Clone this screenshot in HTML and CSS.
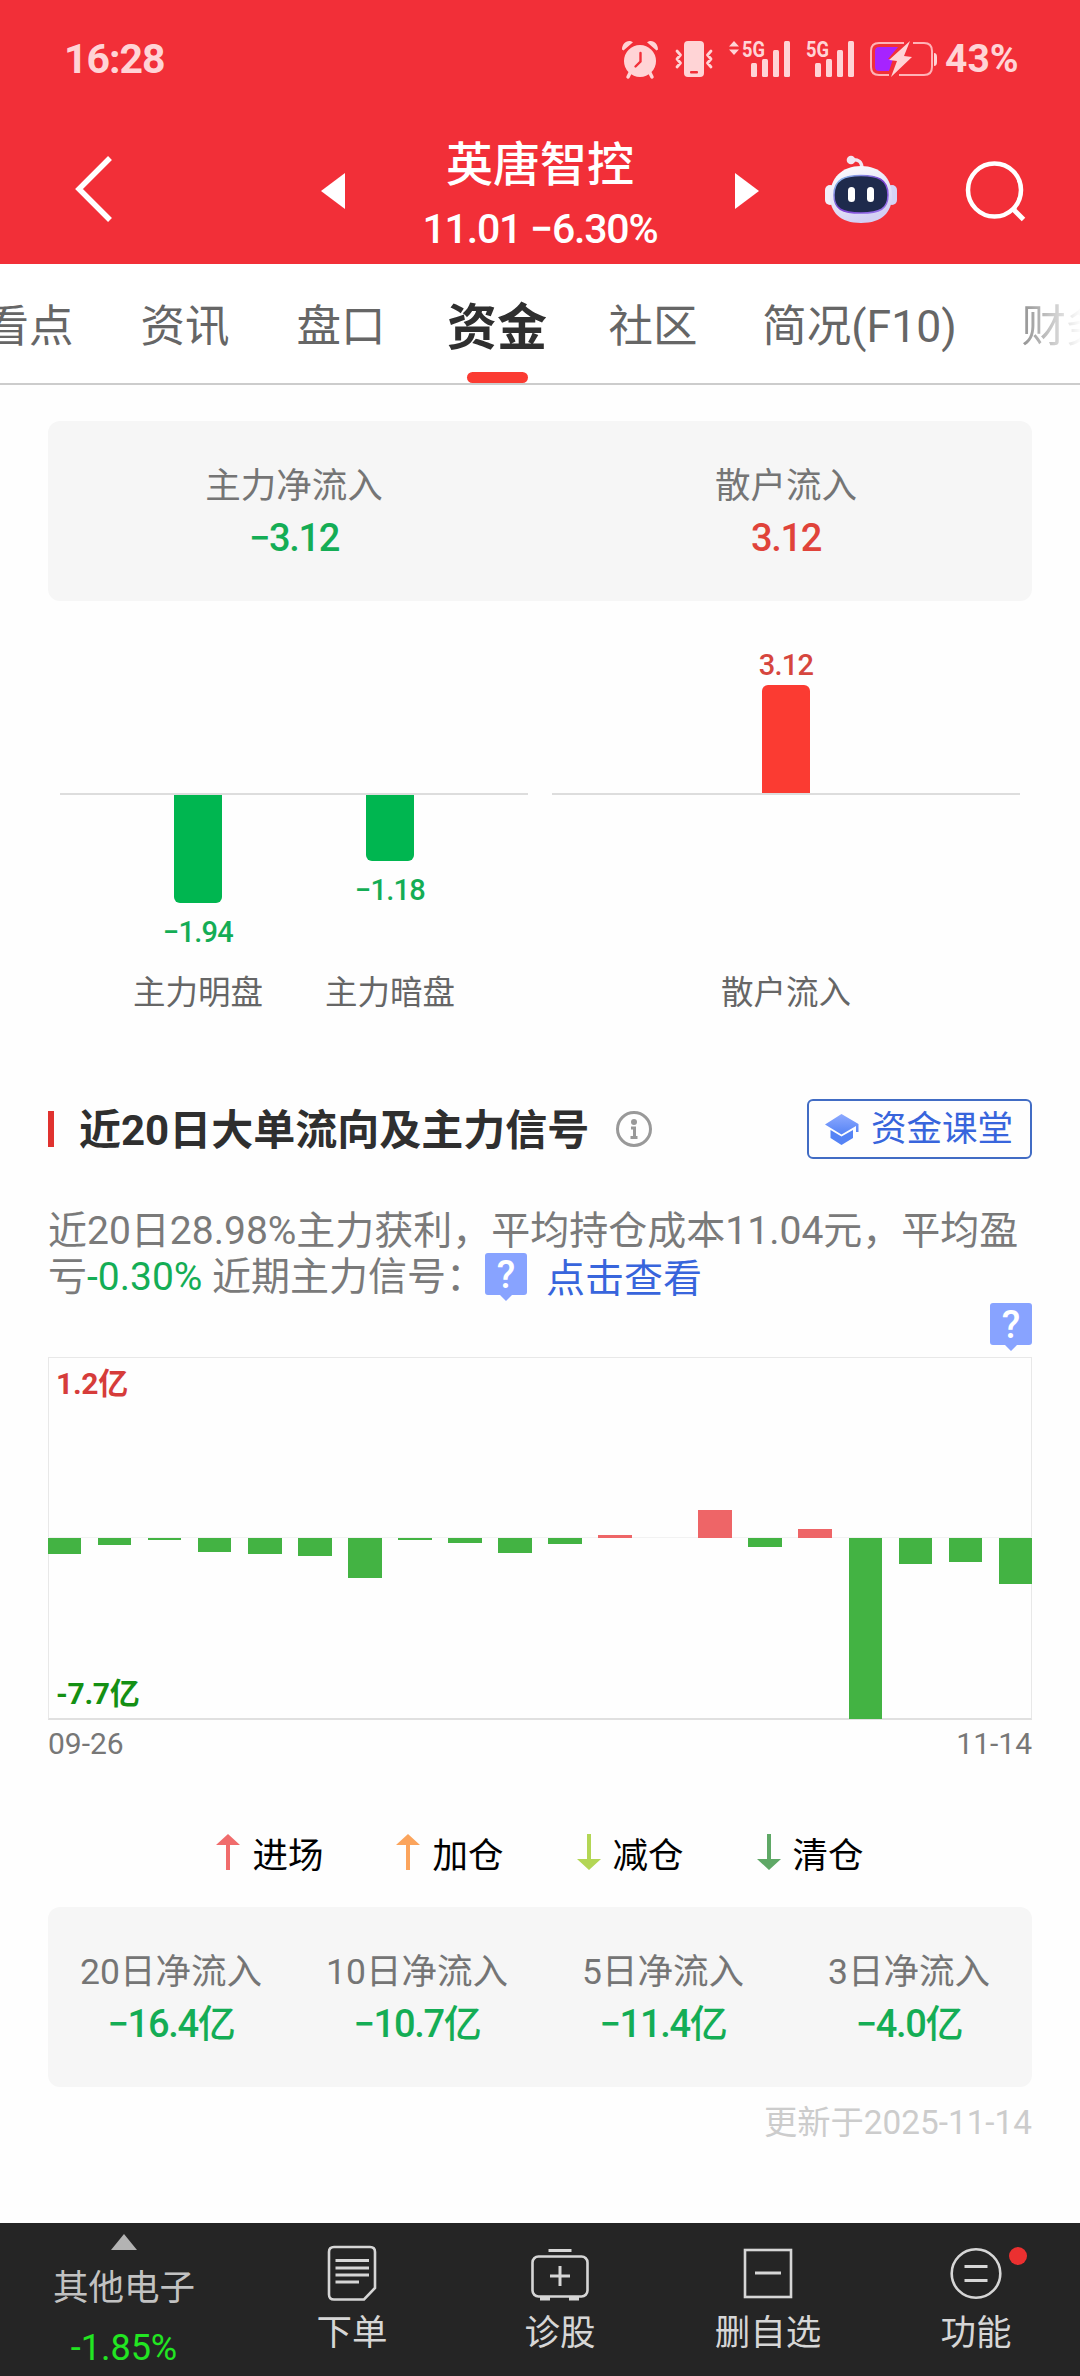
FILE: index.html
```html
<!DOCTYPE html>
<html lang="zh-CN">
  <head>
    <meta charset="utf-8" />
    <meta name="viewport" content="width=device-width, initial-scale=1" />
    <title>英唐智控 - 资金</title>
    <link rel="stylesheet" href="styles.css">
  </head>
  <body>
    <header class="top">
      <div class="status">
        <span class="time">16:28</span>
        <div class="status-icons">
          <svg width="38" height="38" viewBox="0 0 38 38" fill="#ffd4d6">
            <circle cx="19" cy="21" r="16" />
            <path d="M1 9.500C1 4 5 0 10 1.200L12 2.200L2.500 10.500ZM37 9.500C37 4 33 0 28 1.200L26 2.200L35.500 10.500Z" />
            <path d="M9 33L7 37M29 33L31 37" stroke="#ffd4d6" stroke-width="3.500" stroke-linecap="round" />
            <path d="M19.500 13V21.500L14.500 26.500" fill="none" stroke="#f22f38" stroke-width="2.400" stroke-linecap="round" />
          </svg>
          <svg width="38" height="38" viewBox="0 0 38 38">
            <rect x="9" y="1" width="20" height="36" rx="4" fill="#ffd4d6" />
            <rect x="15" y="31" width="8" height="2.500" rx="1" fill="#f22f38" />
            <path d="M2 11L5.500 15L2 19L5.500 23L2 27M36 11L32.500 15L36 19L32.500 23L36 27" fill="none" stroke="#ffd4d6" stroke-width="2.800" stroke-linecap="round" stroke-linejoin="round" />
          </svg>
          <svg width="61" height="38" viewBox="0 0 61 38" fill="#ffd4d6">
            <path d="M0 6.500L5 1L10 6.500ZM0 9.500L5 15L10 9.500Z" />
            <text class="net" x="13" y="16.500" textLength="23" lengthAdjust="spacingAndGlyphs">5G</text>
            <rect x="22" y="23" width="6" height="14" rx="1.500" />
            <rect x="33" y="19" width="6" height="18" rx="1.500" />
            <rect x="44" y="10" width="6" height="27" rx="1.500" />
            <rect x="55" y="1" width="6" height="36" rx="1.500" />
          </svg>
          <svg width="48" height="38" viewBox="0 0 48 38" fill="#ffd4d6">
            <text class="net" x="0" y="16.500" textLength="23" lengthAdjust="spacingAndGlyphs">5G</text>
            <rect x="9" y="23" width="6" height="14" rx="1.500" />
            <rect x="20" y="19" width="6" height="18" rx="1.500" />
            <rect x="31" y="10" width="6" height="27" rx="1.500" />
            <rect x="42" y="1" width="6" height="36" rx="1.500" />
          </svg>
          <svg class="battery" width="68" height="38" viewBox="0 0 68 38">
            <path d="M34 3H9Q1 3 1 11V27Q1 35 9 35H19M43 3H54Q62 3 62 11V27Q62 35 54 35H29" fill="none" stroke="#ffb3b7" stroke-width="2" />
            <path d="M9 7H28L18 19H23L19 31H9Q5 31 5 27V11Q5 7 9 7Z" fill="#a623ff" />
            <path d="M40 1L19 20L27 21L21 37L42 17L34 16Z" fill="#ffd4d6" />
            <path d="M64 13Q67 13 67 17V22Q67 26 64 26Z" fill="#ffd4d6" />
          </svg>
          <span class="percent">43%</span>
        </div>
      </div>

      <div class="titlebar">
        <svg class="back" width="40" height="68" viewBox="0 0 40 68">
          <path d="M35 3L4 34L35 65" fill="none" stroke="#fff" stroke-width="5.500" />
        </svg>
        <div class="stock-nav">
          <svg width="24" height="36" viewBox="0 0 24 36"><path d="M24 0V36L0 18Z" fill="#fff" /></svg>
          <div class="stock">
            <h1 class="stock-name">英唐智控</h1>
            <p class="stock-price">11.01 −6.30%</p>
          </div>
          <svg width="24" height="36" viewBox="0 0 24 36"><path d="M0 0V36L24 18Z" fill="#fff" /></svg>
        </div>
        <svg class="robot" width="72" height="68" viewBox="0 0 72 68">
          <defs>
            <linearGradient id="shell" x1="0" y1="0" x2="0.400" y2="1">
              <stop offset="0" stop-color="#fff" />
              <stop offset="0.600" stop-color="#e6e4f6" />
              <stop offset="1" stop-color="#d3cff4" />
            </linearGradient>
            <linearGradient id="rim" x1="0" y1="0" x2="1" y2="1">
              <stop offset="0" stop-color="#8fd3f0" />
              <stop offset="0.500" stop-color="#7a3ed0" />
              <stop offset="1" stop-color="#9a7cf0" />
            </linearGradient>
          </defs>
          <path d="M26 5Q37 3 37 14" fill="none" stroke="#f1e6f2" stroke-width="3.500" />
          <circle cx="26" cy="5" r="4.300" fill="#f1e6f2" />
          <rect x="0" y="30" width="10" height="20" rx="5" fill="#f3effa" />
          <rect x="62" y="30" width="10" height="20" rx="5" fill="#d5d3f5" />
          <path d="M36 11C55 11 67 23 67 41C67 57 57 68 36 68C15 68 5 57 5 41C5 23 17 11 36 11Z" fill="url(#shell)" />
          <path d="M36 20.500C52 20.500 63 24 63 40C63 54 55 58 36 58C17 58 9 54 9 40C9 24 20 20.500 36 20.500Z" fill="#1e2a4c" stroke="url(#rim)" stroke-width="1.500" />
          <rect x="23" y="32" width="7" height="15" rx="3.500" fill="#fff" />
          <rect x="42" y="32" width="7" height="15" rx="3.500" fill="#fff" />
        </svg>
        <svg class="search" width="60" height="60" viewBox="0 0 60 60" fill="none" stroke="#fff">
          <circle cx="28.500" cy="29" r="26.500" stroke-width="4.500" />
          <path d="M47 48L57.500 58.500" stroke-width="5" />
        </svg>
      </div>
    </header>

    <nav class="tabs">
      <a class="tab">看点</a>
      <a class="tab">资讯</a>
      <a class="tab">盘口</a>
      <a class="tab active">资金</a>
      <a class="tab">社区</a>
      <a class="tab wide">简况(F10)</a>
      <a class="tab">财务</a>
    </nav>

    <main class="content">
      <section class="panel">
        <div class="cell">
          <p class="label">主力净流入</p>
          <p class="value down">−3.12</p>
        </div>
        <div class="cell">
          <p class="label">散户流入</p>
          <p class="value up">3.12</p>
        </div>
      </section>

      <section class="flow">
        <div class="flow-group">
          <div class="above"></div>
          <div class="below">
            <div class="col"><i class="flow-bar" style="height: 108px"></i><span class="flow-value down">−1.94</span></div>
            <div class="col"><i class="flow-bar" style="height: 66px"></i><span class="flow-value down">−1.18</span></div>
          </div>
          <div class="names"><span>主力明盘</span><span>主力暗盘</span></div>
        </div>
        <div class="flow-group">
          <div class="above">
            <div class="col"><span class="flow-value red">3.12</span><i class="flow-bar" style="height: 108px"></i></div>
          </div>
          <div class="below"></div>
          <div class="names"><span>散户流入</span></div>
        </div>
      </section>

      <section class="section-head">
        <h2 class="section-title">近20日大单流向及主力信号</h2>
        <svg class="info" width="36" height="36" viewBox="0 0 36 36">
          <circle cx="18" cy="18" r="16.500" fill="none" stroke="#999" stroke-width="3" />
          <circle cx="18" cy="11" r="3" fill="#999" />
          <path d="M15 17H18.500V26M14.500 26.500H21.500" fill="none" stroke="#999" stroke-width="3" />
        </svg>
        <a class="lesson">
          <svg width="34" height="31" viewBox="0 0 34 31">
            <defs>
              <linearGradient id="cap" x1="0" y1="0" x2="0" y2="1">
                <stop offset="0" stop-color="#8eaaff" />
                <stop offset="1" stop-color="#5583f5" />
              </linearGradient>
            </defs>
            <path d="M16.500 0L33.500 10V18H31V12L16.500 20.500L0 10.500Z" fill="url(#cap)" />
            <path d="M5.500 16L16.500 22.500L28 16V24L16.500 31L5.500 24Z" fill="#5583f5" />
          </svg>
          <span>资金课堂</span>
        </a>
      </section>

      <p class="summary">近20日28.98%主力获利，平均持仓成本11.04元，平均盈亏<span class="down">-0.30%</span> 近期主力信号：<svg class="hint" width="42" height="48" viewBox="0 0 42 48"><path d="M3 0H39Q42 0 42 3V39Q42 42 39 42H27L21 48L15 42H3Q0 42 0 39V3Q0 0 3 0Z" fill="#88a3ff" /><text class="hint-mark" x="21" y="35">?</text></svg><a class="link">点击查看</a></p>

      <svg class="chart-hint" width="42" height="48" viewBox="0 0 42 48">
        <path d="M3 0H39Q42 0 42 3V39Q42 42 39 42H27L21 48L15 42H3Q0 42 0 39V3Q0 0 3 0Z" fill="#88a3ff" />
        <text class="hint-mark" x="21" y="35">?</text>
      </svg>

      <section class="chart">
        <span class="chart-max">1.2亿</span>
        <span class="chart-min">-7.7亿</span>
        <div class="bars">
          <i class="bar" style="height: 16px"></i>
          <i class="bar" style="height: 6.5px"></i>
          <i class="bar" style="height: 1.5px"></i>
          <i class="bar" style="height: 14px"></i>
          <i class="bar" style="height: 15.5px"></i>
          <i class="bar" style="height: 18px"></i>
          <i class="bar" style="height: 40px"></i>
          <i class="bar" style="height: 2px"></i>
          <i class="bar" style="height: 5px"></i>
          <i class="bar" style="height: 14.5px"></i>
          <i class="bar" style="height: 6px"></i>
          <i class="bar in" style="height: 3px"></i>
          <i class="bar" style="height: 0"></i>
          <i class="bar in" style="height: 28px"></i>
          <i class="bar" style="height: 9px"></i>
          <i class="bar in" style="height: 9px"></i>
          <i class="bar" style="height: 181px"></i>
          <i class="bar" style="height: 25.5px"></i>
          <i class="bar" style="height: 23.5px"></i>
          <i class="bar" style="height: 46px"></i>
        </div>
      </section>
      <div class="dates"><span>09-26</span><span>11-14</span></div>

      <div class="legend">
        <span class="legend-item"><svg width="24" height="36" viewBox="0 0 24 36" fill="#f06c6c"><path d="M12 0L24 11H14V36H10V11H0Z" /></svg>进场</span>
        <span class="legend-item"><svg width="24" height="36" viewBox="0 0 24 36" fill="#fba45c"><path d="M12 0L24 11H14V36H10V11H0Z" /></svg>加仓</span>
        <span class="legend-item"><svg width="24" height="36" viewBox="0 0 24 36" fill="#b3d655"><path d="M12 36L24 25H14V0H10V25H0Z" /></svg>减仓</span>
        <span class="legend-item"><svg width="24" height="36" viewBox="0 0 24 36" fill="#5fa866"><path d="M12 36L24 25H14V0H10V25H0Z" /></svg>清仓</span>
      </div>

      <section class="panel">
        <div class="cell">
          <p class="label">20日净流入</p>
          <p class="value down">−16.4亿</p>
        </div>
        <div class="cell">
          <p class="label">10日净流入</p>
          <p class="value down">−10.7亿</p>
        </div>
        <div class="cell">
          <p class="label">5日净流入</p>
          <p class="value down">−11.4亿</p>
        </div>
        <div class="cell">
          <p class="label">3日净流入</p>
          <p class="value down">−4.0亿</p>
        </div>
      </section>
      <p class="updated">更新于2025-11-14</p>
    </main>

    <footer class="toolbar">
      <div class="sector">
        <svg width="26" height="16" viewBox="0 0 26 16"><path d="M13 0L26 16H0Z" fill="#b3b3b3" /></svg>
        <span class="sector-name">其他电子</span>
        <span class="sector-change">-1.85%</span>
      </div>
      <a class="tool">
        <svg width="50" height="58" viewBox="0 0 50 58" fill="none" stroke="#d6d6d6" stroke-width="2.600">
          <path d="M7 3H43Q48 3 48 8V44L37 55.500H7Q2 55.500 2 50.500V8Q2 3 7 3Z" />
          <path d="M8.500 16.500H42M8.500 24H42M8.500 31H42M8.500 38H32" stroke-width="3" />
        </svg>
        下单
      </a>
      <a class="tool">
        <svg width="60" height="58" viewBox="0 0 60 58" fill="none" stroke="#d6d6d6" stroke-width="2.600">
          <rect x="2.500" y="12.500" width="55" height="40" rx="6" />
          <path d="M18.500 6.500H41.500M20 32H40M30 22V42" stroke-width="3" />
          <path d="M10 54.500H20M39 54.500H49" stroke-width="4" />
        </svg>
        诊股
      </a>
      <a class="tool">
        <svg width="50" height="58" viewBox="0 0 50 58" fill="none" stroke="#d6d6d6" stroke-width="2.600">
          <rect x="2" y="6" width="46" height="47" />
          <path d="M12 29H38" stroke-width="3" />
        </svg>
        删自选
      </a>
      <a class="tool">
        <svg width="52" height="58" viewBox="0 0 52 58" fill="none" stroke="#d6d6d6" stroke-width="2.600">
          <circle cx="26" cy="29.500" r="24.300" />
          <path d="M14.500 22.500H37.500M14.500 36.500H37.500" stroke-width="3" />
        </svg>
        功能
        <i class="dot"></i>
      </a>
    </footer>
  </body>
</html>
```
FILE: styles.css
```css
* {
  box-sizing: border-box;
  margin: 0;
  padding: 0;
}

body {
  width: 1080px;
  height: 2376px;
  display: flex;
  flex-direction: column;
  overflow: hidden;
  background: #fefefe;
  color: #666;
  font-family: Roboto, "Noto Sans CJK SC", sans-serif;
}

svg {
  display: block;
  flex: none;
  overflow: visible;
}

/* header */
.top {
  height: 264px;
  background: #f22f38;
  color: #fff;
}

.status {
  display: flex;
  justify-content: space-between;
  align-items: center;
  height: 118px;
  padding: 0 57px 0 64px;
  color: #ffd4d6;
}

.time {
  font-size: 41px;
  font-weight: 700;
  letter-spacing: -1px;
}

.status-icons {
  display: flex;
  align-items: center;
  gap: 16px;
}

.net {
  font-size: 22px;
  font-weight: 700;
}

.battery {
  margin-right: -9px;
}

.percent {
  width: 78px;
  font-size: 39px;
  font-weight: 700;
}

.titlebar {
  display: flex;
  align-items: center;
  height: 142px;
  padding-left: 75px;
}

.stock-nav {
  display: flex;
  justify-content: space-between;
  align-items: center;
  width: 438px;
  margin-left: 206px;
}

.stock-nav > svg {
  margin-top: 4px;
}

.stock {
  padding-top: 14px;
  text-align: center;
  white-space: nowrap;
}

.stock-name {
  font-size: 47px;
  font-weight: 500;
  line-height: 66px;
}

.stock-price {
  font-size: 41px;
  font-weight: 500;
  line-height: 63px;
  letter-spacing: -1.2px;
}

.robot {
  margin-left: 66px;
}

.search {
  margin: 4px 0 0 69px;
}

/* tabs */
.tabs {
  display: flex;
  height: 121px;
  overflow: hidden;
  border-bottom: 2px solid #ccc;
  background: #fff;
}

.tab {
  display: flex;
  flex: none;
  flex-direction: column;
  align-items: center;
  width: 156px;
  padding-top: 32px;
  font-size: 44.5px;
  line-height: 62px;
  white-space: nowrap;
}

.tab:first-child {
  margin-left: -49px;
}

.tab:last-child {
  mask-image: linear-gradient(90deg, rgba(0, 0, 0, 0.7) 34px, transparent 94px);
}

.tab.wide {
  width: 257px;
}

.tab.active {
  padding-top: 33px;
  color: #2f2f2f;
  font-size: 50px;
  font-weight: 700;
}

.tab.active::after {
  content: "";
  width: 61px;
  height: 12px;
  margin-top: 13px;
  border-radius: 6px;
  background: #fb3b32;
}

/* content */
.content {
  padding: 36px 48px 0;
}

.up {
  color: #e0433a;
}

.down {
  color: #14ad55;
}

.panel {
  display: flex;
  height: 180px;
  padding-top: 39px;
  border-radius: 12px;
  background: #f6f6f6;
}

.cell {
  flex: 1;
  text-align: center;
}

.label {
  color: #757575;
  font-size: 35.5px;
  line-height: 52px;
}

.value {
  font-size: 38px;
  font-weight: 500;
  line-height: 52px;
  letter-spacing: -1.3px;
}

/* main force / retail bars */
.flow {
  display: flex;
  gap: 24px;
  padding: 0 12px;
}

.flow-group {
  flex: 1;
}

.above,
.below {
  display: flex;
  justify-content: center;
}

.above {
  align-items: flex-end;
  height: 194px;
  border-bottom: 2px solid #ddd;
}

.below {
  height: 174px;
}

.col {
  display: flex;
  flex-direction: column;
  align-items: center;
  width: 192px;
}

.flow-bar {
  width: 48px;
}

.above .flow-bar {
  border-radius: 6px 6px 0 0;
  background: #fb3b32;
}

.below .flow-bar {
  border-radius: 0 0 6px 6px;
  background: #00b650;
}

.flow-value {
  margin: 15px 0 5px;
  font-size: 29px;
  font-weight: 500;
  line-height: 29px;
  letter-spacing: -0.8px;
}

.flow-value.red {
  color: #d6463e;
}

.names {
  display: flex;
  justify-content: center;
  font-size: 32.5px;
  line-height: 48px;
}

.names span {
  width: 192px;
  text-align: center;
}

/* section head */
.section-head {
  display: flex;
  align-items: center;
  height: 60px;
  margin-top: 82px;
}

.section-head::before {
  content: "";
  width: 6px;
  height: 36px;
  background: #e0322f;
}

.section-title {
  margin-left: 25px;
  color: #2f2f2f;
  font-size: 42px;
  font-weight: 700;
  line-height: 56px;
  padding-top: 4px;
}

.info {
  margin-left: 27px;
}

.lesson {
  display: flex;
  align-items: center;
  gap: 12px;
  width: 225px;
  height: 60px;
  margin-left: auto;
  padding-left: 16px;
  border: 2px solid #416cc4;
  border-radius: 6px;
  color: #3865dc;
  font-size: 35.5px;
  line-height: 56px;
  white-space: nowrap;
}

.summary {
  margin-top: 49px;
  color: #7a7a7a;
  font-size: 39px;
  line-height: 46px;
}

.hint {
  display: inline;
  margin: -4px 19px -4px 0;
  vertical-align: -7px;
}

.hint-mark {
  fill: #fff;
  font-size: 38px;
  font-weight: 500;
  text-anchor: middle;
}

.link {
  position: relative;
  top: 2px;
  color: #3865dc;
}

.chart-hint {
  margin: 3px 0 0 auto;
}

/* 20 day chart */
.chart {
  position: relative;
  height: 363px;
  margin-top: 6px;
  border: 1px solid #e8e8e8;
  border-bottom: 2px solid #e0e0e0;
  font-size: 30px;
  font-weight: 700;
  line-height: 36px;
  letter-spacing: -0.3px;
}

.chart-max,
.chart-min {
  position: absolute;
  left: 7px;
}

.chart-max {
  top: 8px;
  color: #d63c3a;
}

.chart-min {
  bottom: 6px;
  color: #149014;
}

.bars {
  display: flex;
  justify-content: space-between;
  align-items: flex-start;
  height: 182px;
  margin: 179px -1px 0;
  border-top: 1px solid #f2f2f2;
}

.bar {
  width: 33.4px;
  background: #43b343;
}

.bar.in {
  background: #ee6567;
  transform: translateY(-100%);
}

.dates {
  display: flex;
  justify-content: space-between;
  padding-top: 6px;
  color: #777;
  font-size: 30px;
  line-height: 36px;
}

.legend {
  display: flex;
  justify-content: center;
  gap: 73px;
  margin: 72px 0 29px;
  color: #000;
  font-size: 35.5px;
  line-height: 44px;
}

.legend-item {
  display: flex;
  gap: 12px;
}

.updated {
  margin-top: 16px;
  color: #ccc;
  font-size: 33.3px;
  line-height: 40px;
  text-align: right;
}

/* bottom toolbar */
.toolbar {
  display: flex;
  height: 153px;
  margin-top: auto;
  background: #252525;
  color: #d6d6d6;
  font-size: 35.5px;
}

.sector {
  display: flex;
  flex-direction: column;
  align-items: center;
  width: 248px;
  padding-top: 11px;
}

.sector-name {
  margin-top: 14px;
  color: #c2c2c2;
  line-height: 48px;
}

.sector-change {
  margin-top: 14px;
  color: #22e622;
  font-size: 36px;
  line-height: 44px;
}

.tool {
  position: relative;
  display: flex;
  flex: 1;
  flex-direction: column;
  align-items: center;
  padding-top: 21px;
  line-height: 58px;
}

.tool svg {
  margin-bottom: 2px;
}

.dot {
  position: absolute;
  top: 24px;
  right: 53px;
  width: 18px;
  height: 18px;
  border-radius: 50%;
  background: #eb3030;
}
```
